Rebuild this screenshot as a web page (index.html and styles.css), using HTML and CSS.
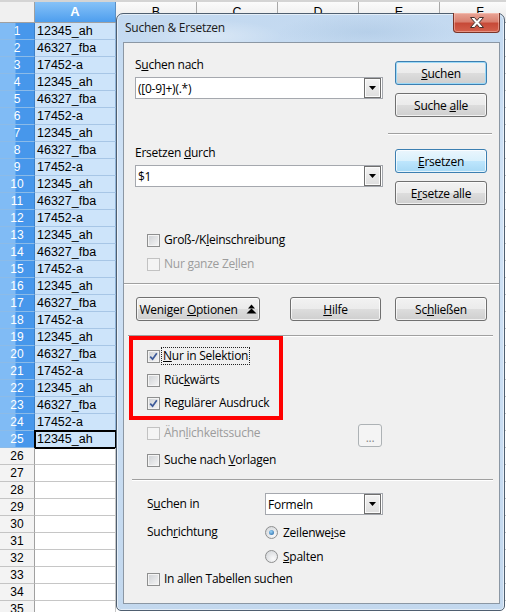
FILE: index.html
```html
<!DOCTYPE html>
<html lang="de">
<head>
<meta charset="utf-8">
<title>Suchen &amp; Ersetzen</title>
<link rel="stylesheet" href="styles.css">
</head>
<body>
<div class="sheet">
  <div class="head">
    <span class="corner"></span>
    <span class="hc sel">A</span>
    <span class="hc">B</span>
    <span class="hc">C</span>
    <span class="hc">D</span>
    <span class="hc">E</span>
    <span class="hc">F</span>
  </div>
  <div class="row sel"><span class="rh">1</span><span class="c">12345_ah</span><span class="rest"></span></div>
  <div class="row sel"><span class="rh">2</span><span class="c">46327_fba</span><span class="rest"></span></div>
  <div class="row sel"><span class="rh">3</span><span class="c">17452-a</span><span class="rest"></span></div>
  <div class="row sel"><span class="rh">4</span><span class="c">12345_ah</span><span class="rest"></span></div>
  <div class="row sel"><span class="rh">5</span><span class="c">46327_fba</span><span class="rest"></span></div>
  <div class="row sel"><span class="rh">6</span><span class="c">17452-a</span><span class="rest"></span></div>
  <div class="row sel"><span class="rh">7</span><span class="c">12345_ah</span><span class="rest"></span></div>
  <div class="row sel"><span class="rh">8</span><span class="c">46327_fba</span><span class="rest"></span></div>
  <div class="row sel"><span class="rh">9</span><span class="c">17452-a</span><span class="rest"></span></div>
  <div class="row sel"><span class="rh">10</span><span class="c">12345_ah</span><span class="rest"></span></div>
  <div class="row sel"><span class="rh">11</span><span class="c">46327_fba</span><span class="rest"></span></div>
  <div class="row sel"><span class="rh">12</span><span class="c">17452-a</span><span class="rest"></span></div>
  <div class="row sel"><span class="rh">13</span><span class="c">12345_ah</span><span class="rest"></span></div>
  <div class="row sel"><span class="rh">14</span><span class="c">46327_fba</span><span class="rest"></span></div>
  <div class="row sel"><span class="rh">15</span><span class="c">17452-a</span><span class="rest"></span></div>
  <div class="row sel"><span class="rh">16</span><span class="c">12345_ah</span><span class="rest"></span></div>
  <div class="row sel"><span class="rh">17</span><span class="c">46327_fba</span><span class="rest"></span></div>
  <div class="row sel"><span class="rh">18</span><span class="c">17452-a</span><span class="rest"></span></div>
  <div class="row sel"><span class="rh">19</span><span class="c">12345_ah</span><span class="rest"></span></div>
  <div class="row sel"><span class="rh">20</span><span class="c">46327_fba</span><span class="rest"></span></div>
  <div class="row sel"><span class="rh">21</span><span class="c">17452-a</span><span class="rest"></span></div>
  <div class="row sel"><span class="rh">22</span><span class="c">12345_ah</span><span class="rest"></span></div>
  <div class="row sel"><span class="rh">23</span><span class="c">46327_fba</span><span class="rest"></span></div>
  <div class="row sel"><span class="rh">24</span><span class="c">17452-a</span><span class="rest"></span></div>
  <div class="row sel"><span class="rh">25</span><span class="c cursor">12345_ah</span><span class="rest"></span></div>
  <div class="row"><span class="rh">26</span><span class="c"></span><span class="rest"></span></div>
  <div class="row"><span class="rh">27</span><span class="c"></span><span class="rest"></span></div>
  <div class="row"><span class="rh">28</span><span class="c"></span><span class="rest"></span></div>
  <div class="row"><span class="rh">29</span><span class="c"></span><span class="rest"></span></div>
  <div class="row"><span class="rh">30</span><span class="c"></span><span class="rest"></span></div>
  <div class="row"><span class="rh">31</span><span class="c"></span><span class="rest"></span></div>
  <div class="row"><span class="rh">32</span><span class="c"></span><span class="rest"></span></div>
  <div class="row"><span class="rh">33</span><span class="c"></span><span class="rest"></span></div>
  <div class="row"><span class="rh">34</span><span class="c"></span><span class="rest"></span></div>
  <div class="row"><span class="rh">35</span><span class="c"></span><span class="rest"></span></div>
</div>

<div class="dialog">
  <div class="titlebar">
    <span class="title">Suchen &amp; Ersetzen</span>
    <span class="close">
      <svg width="14" height="11" viewBox="0 0 14 11"><path d="M0.5 0.5h4l2.5 3 2.5-3h4l-4.3 5 4.3 5h-4l-2.5-3-2.5 3h-4l4.3-5z" fill="#fff" stroke="#43302c" stroke-width="1"/></svg>
    </span>
  </div>
  <div class="client">
    <section class="top">
      <div class="fields">
        <div class="lbl">S<u>u</u>chen nach</div>
        <div class="combo"><span>([0-9]+)(.*)</span><span class="drop"><svg width="7" height="4" viewBox="0 0 7 4"><path d="M0 0h7L3.5 4z" fill="#000"/></svg></span></div>
        <div class="lbl lbl-second">Ersetzen <u>d</u>urch</div>
        <div class="combo"><span>$1</span><span class="drop"><svg width="7" height="4" viewBox="0 0 7 4"><path d="M0 0h7L3.5 4z" fill="#000"/></svg></span></div>
      </div>
      <div class="actions">
        <div class="btn default"><span><u>S</u>uchen</span></div>
        <div class="btn"><span>Suche <u>a</u>lle</span></div>
        <hr class="sep sep-side">
        <div class="btn hot"><span><u>E</u>rsetzen</span></div>
        <div class="btn"><span>E<u>r</u>setze alle</span></div>
      </div>
    </section>

    <section class="opts opts-first">
      <div class="opt"><span class="cb"></span><span>Groß-/K<u>l</u>einschreibung</span></div>
      <div class="opt off"><span class="cb"></span><span>Nur ganze Ze<u>l</u>len</span></div>
    </section>

    <hr class="sep sep-full">

    <div class="btnrow">
      <div class="btn more"><span>Weniger <u>O</u>ptionen</span><svg class="updown" width="11" height="10" viewBox="0 0 11 10"><path d="M5.5 0.5L9 4.5H2z" fill="#000"/><path d="M5.5 4.5L10.5 9.5H0.5z" fill="#000"/></svg></div>
      <div class="btn help"><span><u>H</u>ilfe</span></div>
      <div class="btn closebtn"><span>Sc<u>h</u>ließen</span></div>
    </div>

    <hr class="sep sep-mid">

    <section class="opts opts-second">
      <div class="opt"><span class="cb on"><svg width="9" height="9" viewBox="0 0 9 9"><path d="M1.2 4.6L3.6 7.2L7.8 1.2" fill="none" stroke="#3d5a99" stroke-width="1.7"/></svg></span><span class="focus"><u>N</u>ur in Selektion</span></div>
      <div class="opt"><span class="cb"></span><span>Rüc<u>k</u>wärts</span></div>
      <div class="opt"><span class="cb on"><svg width="9" height="9" viewBox="0 0 9 9"><path d="M1.2 4.6L3.6 7.2L7.8 1.2" fill="none" stroke="#3d5a99" stroke-width="1.7"/></svg></span><span>Re<u>g</u>ulärer Ausdruck</span></div>
      <div class="opt-line">
        <div class="opt off similar"><span class="cb"></span><span>Ähn<u>l</u>ichkeitssuche</span></div>
        <div class="btn dots"><span>...</span></div>
      </div>
      <div class="opt opt-last"><span class="cb"></span><span>Suche nach <u>V</u>orlagen</span></div>
    </section>

    <hr class="sep sep-low">

    <section class="where">
      <div class="where-row">
        <span class="wl">S<u>u</u>chen in</span>
        <div class="combo combo-small"><span>Formeln</span><span class="drop"><svg width="7" height="4" viewBox="0 0 7 4"><path d="M0 0h7L3.5 4z" fill="#000"/></svg></span></div>
      </div>
      <div class="where-row dir">
        <span class="wl">Such<u>r</u>ichtung</span>
        <div class="radio"><span class="rb on"></span><span>Zeilenwe<u>i</u>se</span></div>
      </div>
      <div class="where-row dir2">
        <span class="wl"></span>
        <div class="radio"><span class="rb"></span><span><u>S</u>palten</span></div>
      </div>
      <div class="opt all"><span class="cb"></span><span>In allen Tabellen suchen</span></div>
    </section>

    <div class="mark"></div>
  </div>
</div>
</body>
</html>
```

FILE: styles.css
```css
* { box-sizing: border-box; }

html, body {
  margin: 0;
  padding: 0;
}

body {
  width: 506px;
  height: 612px;
  overflow: hidden;
  position: relative;
  background: #fff;
}

/* ---------- spreadsheet ---------- */
.sheet {
  font-family: "Liberation Sans", Arial, sans-serif;
  font-size: 12.5px;
  color: #000;
  width: 560px;
  height: 612px;
  overflow: hidden;
}

.head {
  display: flex;
  height: 23px;
  border-top: 2px solid #d4d4d4;
}

.corner {
  width: 35px;
  flex: none;
  background: #f0f0f0;
  border-right: 1px solid #a0a0a0;
  border-bottom: 1px solid #a0a0a0;
}

.hc {
  width: 81px;
  flex: none;
  text-align: center;
  line-height: 20px;
  background: linear-gradient(#fbfbfb, #e8e8e8);
  border-right: 1px solid #a8a8a8;
  border-bottom: 1px solid #a0a0a0;
}

.hc.sel {
  background: linear-gradient(#86c2f8, #4e9eee);
  color: #fff;
  font-weight: bold;
  font-size: 13px;
  border-right-color: #5a8fc4;
}

.row {
  display: flex;
  height: 17px;
}

.rh {
  width: 35px;
  flex: none;
  text-align: center;
  line-height: 16px;
  font-size: 12px;
  background: #f3f3f3;
  border-right: 1px solid #a0a0a0;
  border-bottom: 1px solid #c4c4c4;
}

.c {
  width: 81px;
  flex: none;
  padding-left: 2px;
  line-height: 16px;
  border-right: 1px solid #c6c6c6;
  border-bottom: 1px solid #c6c6c6;
}

.rest {
  flex: 1;
  border-bottom: 1px solid #c6c6c6;
}

.row.sel .rh {
  background: linear-gradient(to right, #80bbf5 0, #80bbf5 15px, #4797eb 16px, #4797eb 100%);
  color: #fff;
  border-right-color: #3c7fc6;
  border-bottom-color: #8cbbe8;
}

.row.sel .c {
  background: #cde4fa;
  border-right-color: #8fb2d6;
  border-bottom-color: #a7c6e6;
}

.c.cursor {
  outline: 2px solid #000;
  outline-offset: -1px;
}

/* ---------- dialog window ---------- */
.dialog {
  position: absolute;
  left: 116px;
  top: 13px;
  width: 389px;
  height: 598px;
  display: flex;
  flex-direction: column;
  border: 1px solid #4f5f70;
  border-radius: 7px 7px 5px 5px;
  background:
    radial-gradient(ellipse 70px 16px at 95px 22px, rgba(255, 255, 255, 0.35), transparent),
    radial-gradient(ellipse 90px 18px at 250px 18px, rgba(140, 175, 210, 0.25), transparent),
    linear-gradient(#c3d9f0, #d1e3f6 30%, #c9ddf2 70%, #c3d8ee);
  box-shadow: inset 0 0 0 1px rgba(255, 255, 255, 0.55);
  font-family: "Open Sans", "Noto Sans", sans-serif;
  font-size: 12px;
  color: #000;
  letter-spacing: -0.25px;
}

.titlebar {
  height: 28px;
  flex: none;
  position: relative;
  padding-left: 8px;
}

.title {
  display: block;
  margin-top: 6px;
  line-height: 16px;
  color: #1a1a1a;
}

.close {
  position: absolute;
  right: 4px;
  top: -1px;
  width: 47px;
  height: 20px;
  display: flex;
  align-items: center;
  justify-content: center;
  border: 1px solid #7a3428;
  border-top: 0;
  border-radius: 0 0 4px 4px;
  background: linear-gradient(#e9a596 0%, #d98070 45%, #c74a38 55%, #d4604c 100%);
  box-shadow: inset 0 0 0 1px rgba(255, 210, 200, 0.45);
}

.client {
  flex: 1;
  margin: 0 4px 6px 6px;
  position: relative;
  background: #f0f0f0;
  border: 1px solid #8b97a4;
}

u { text-decoration: underline; text-underline-offset: 1px; }

/* ---------- controls ---------- */
.btn {
  height: 24px;
  display: flex;
  align-items: center;
  justify-content: center;
  border: 1px solid #707070;
  border-radius: 3px;
  background: linear-gradient(#f2f2f2 0%, #ebebeb 50%, #dddddd 50%, #cfcfcf 100%);
  box-shadow: inset 0 0 0 1px rgba(255, 255, 255, 0.7);
  white-space: nowrap;
}

.btn.default {
  border-color: #3c7fb1;
  box-shadow: inset 0 0 0 1px #9cd9f7;
}

.btn.hot {
  border-color: #3c7fb1;
  background: linear-gradient(#eaf6fd 0%, #d9f0fc 50%, #bee6fd 50%, #a7d9f5 100%);
}

.combo {
  height: 22px;
  display: flex;
  align-items: center;
  justify-content: space-between;
  padding: 0 1px 0 2px;
  background: #fff;
  border: 1px solid #a5a8ae;
}

.drop {
  width: 17px;
  height: 20px;
  flex: none;
  display: flex;
  align-items: center;
  justify-content: center;
  border: 1px solid #6f6f6f;
  background: linear-gradient(#f3f3f3, #dedede);
  box-shadow: inset 0 0 0 1px #fbfbfb;
}

.sep {
  border: 0;
  height: 2px;
  margin: 0;
  border-top: 1px solid #a0a0a0;
  border-bottom: 1px solid #fff;
}

.cb {
  width: 13px;
  height: 13px;
  flex: none;
  margin-right: 4px;
  display: flex;
  align-items: center;
  justify-content: center;
  border: 1px solid #8e8f8f;
  background: linear-gradient(135deg, #cdd0d4, #f6f6f6);
  box-shadow: inset 0 0 0 1px #f4f4f4;
}

.opt {
  height: 16px;
  display: flex;
  align-items: center;
  line-height: 16px;
  white-space: nowrap;
}

.opt.off { color: #9c9c9c; }

.opt.off .cb {
  border-color: #c2c2c2;
  background: #f4f4f4;
  box-shadow: none;
}

.focus {
  outline: 1px dotted #222;
  padding: 0 1px;
  margin-left: -2px;
}

.radio {
  display: flex;
  align-items: center;
  height: 16px;
  white-space: nowrap;
}

.rb {
  width: 13px;
  height: 13px;
  flex: none;
  margin-right: 5px;
  border-radius: 50%;
  border: 1px solid #8e8f8f;
  background: radial-gradient(circle at 65% 70%, #fafafa, #cfd2d6);
  display: flex;
  align-items: center;
  justify-content: center;
}

.rb.on::after {
  content: "";
  width: 5px;
  height: 5px;
  border-radius: 50%;
  background: radial-gradient(circle at 40% 35%, #9ad6fa, #1c5c9c);
}

/* ---------- dialog layout ---------- */
.top {
  display: flex;
  padding-left: 11px;
}

.fields {
  width: 248px;
  padding-top: 14px;
}

.lbl {
  line-height: 16px;
  margin-bottom: 4px;
}

.lbl-second { margin-top: 46px; }

.actions {
  width: 92px;
  margin-left: 12px;
  padding-top: 18px;
  display: flex;
  flex-direction: column;
}

.actions .btn + .btn { margin-top: 8px; }

.sep-side { margin: 16px -5px 14px -7px; }

.opts { padding-left: 23px; }

.opts-first {
  margin-top: 27px;
  display: flex;
  flex-direction: column;
  gap: 8px;
}

.sep-full { margin-top: 11px; }

.btnrow {
  display: flex;
  margin-top: 12px;
  padding-left: 12px;
}

.btn.more { width: 124px; gap: 8px; }
.updown { flex: none; }
.btn.help { width: 91px; margin-left: 30px; }
.btn.closebtn { width: 92px; margin-left: 14px; }

.sep-mid { margin: 14px 6px 0 4px; }

.opts-second {
  margin-top: 11px;
  display: flex;
  flex-direction: column;
}

.opts-second .opt + .opt { margin-top: 8px; }
.opts-second .opt:nth-child(3) { margin-top: 7px; }

.opt-line {
  display: flex;
  align-items: flex-start;
  margin-top: 13px;
  height: 23px;
}

.opt.similar {
  width: 211px;
  margin-top: 1px;
}

.btn.dots {
  width: 24px;
  height: 23px;
  color: #8a8a8a;
  border-color: #adb2b5;
  background: #f4f4f4;
  box-shadow: none;
  padding-top: 3px;
}

.opts-second .opt.opt-last { margin-top: 5px; }

.sep-low { margin: 11px 6px 0 8px; }

.where {
  padding-left: 23px;
  margin-top: 12px;
}

.where-row {
  display: flex;
  align-items: center;
}

.wl {
  width: 118px;
  flex: none;
  line-height: 16px;
}

.combo-small { width: 118px; }

.where-row.dir { margin-top: 9px; }
.where-row.dir2 { margin-top: 8px; }
.opt.all { margin-top: 7px; }

/* red annotation frame drawn over the option group */
.mark {
  position: absolute;
  left: 5px;
  top: 293px;
  width: 154px;
  height: 84px;
  border: 4px solid #ff0000;
  pointer-events: none;
}
```
